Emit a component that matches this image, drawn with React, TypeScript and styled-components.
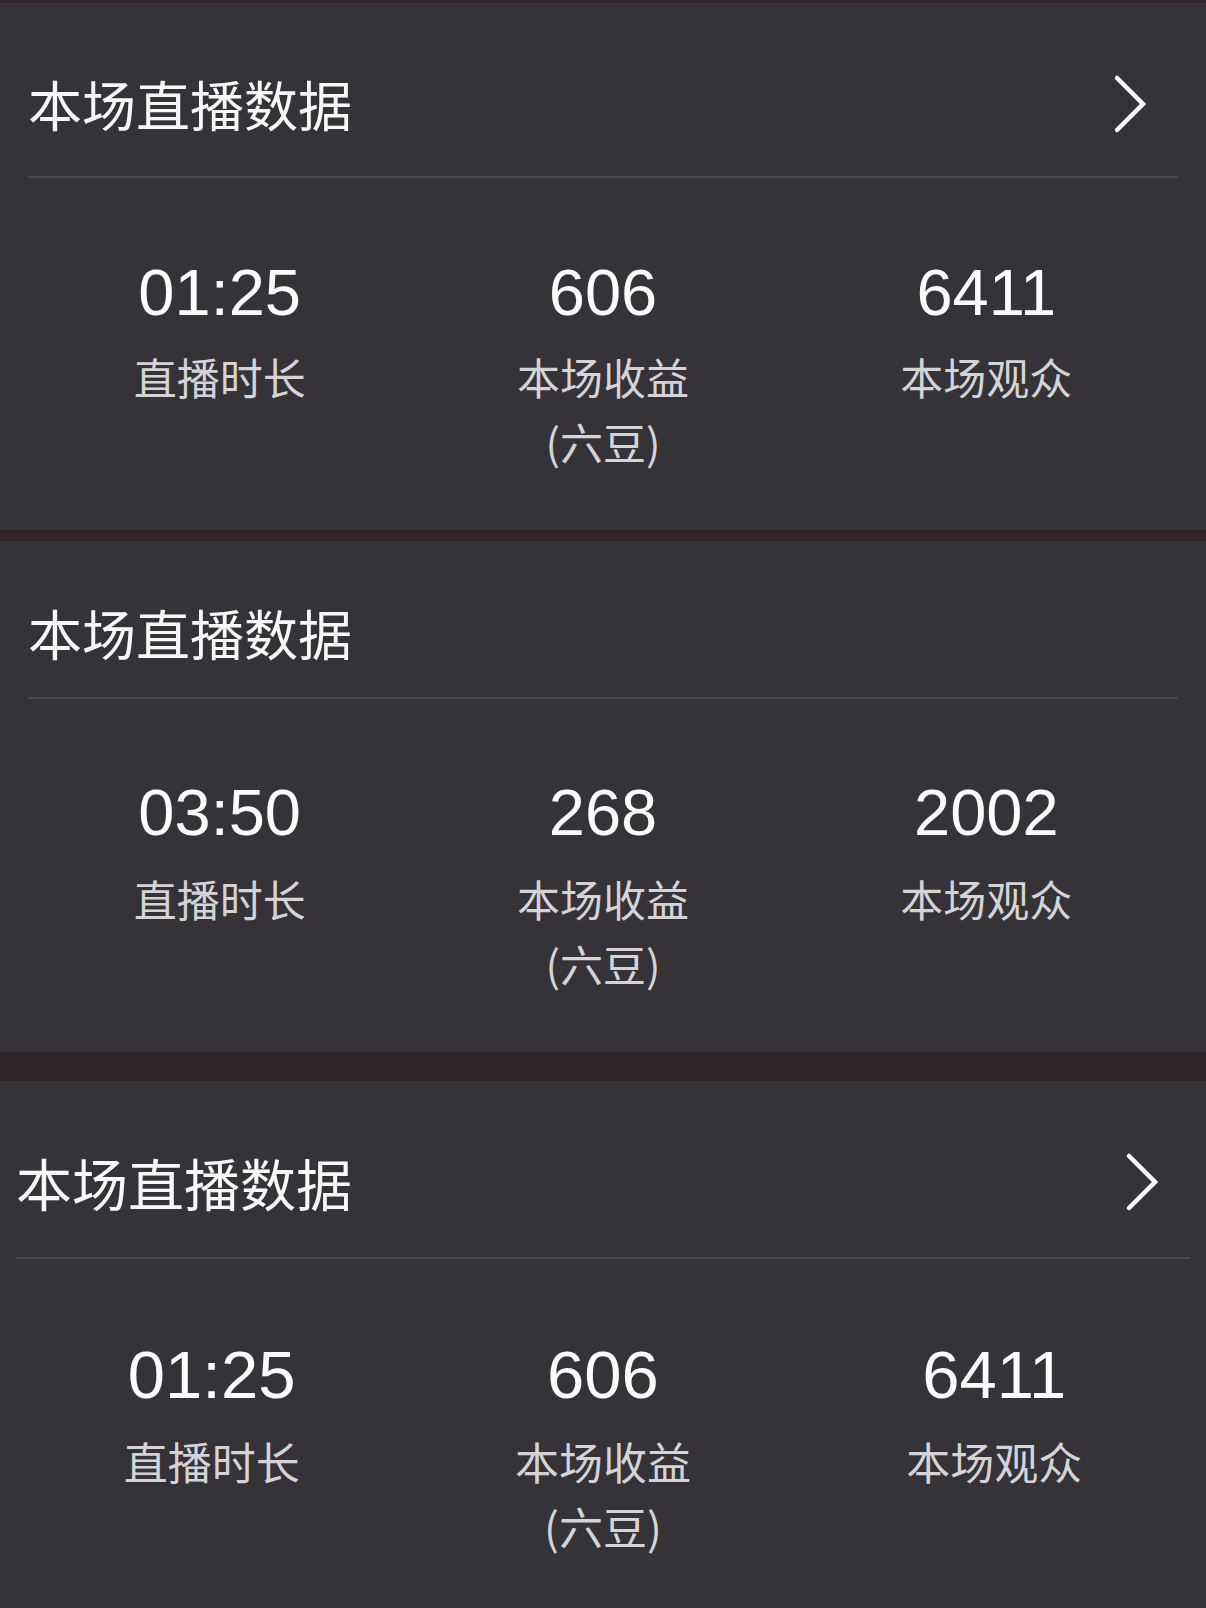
import styled, { createGlobalStyle } from 'styled-components';

const GlobalStyle = createGlobalStyle`
	html,
	body {
		margin: 0;
		padding: 0;
		background-color: #2f2529;
	}
	body {
		font-family: 'Liberation Sans', 'Noto Sans CJK SC', sans-serif;
		-webkit-font-smoothing: antialiased;
	}
`;

const Page = styled.div`
	display: flex;
	flex-direction: column;
	width: 1206px;
	height: 1608px;
	overflow: hidden;
`;

interface CardLayout {
	$offset: number;
	$inset: number;
	$headTop: number;
	$headBottom: number;
	$bodyTop: number;
	$titleSize: number;
	$valueSize: number;
	$labelSize: number;
	$labelGap: number;
}

const Card = styled.section<Pick<CardLayout, '$offset'>>`
	flex-shrink: 0;
	margin-top: ${props => props.$offset}px;
	background-color: #353238;
`;

const Header = styled.header<Pick<CardLayout, '$inset' | '$headTop' | '$headBottom'>>`
	display: flex;
	align-items: center;
	justify-content: space-between;
	margin: 0 ${props => props.$inset}px;
	padding: ${props => props.$headTop}px 0 ${props => props.$headBottom}px;
	border-bottom: 2px solid #4a474e;
`;

const Title = styled.h2<{ $size: number }>`
	margin: 0;
	font-family: 'Noto Sans CJK SC', sans-serif;
	font-weight: 400;
	font-size: ${props => props.$size}px;
	line-height: 1;
	color: #f7f7f7;
`;

const More = styled.svg`
	display: block;
	margin-right: 32px;
	overflow: visible;
`;

const StatGrid = styled.div<Pick<CardLayout, '$inset' | '$bodyTop'>>`
	display: grid;
	grid-template-columns: repeat(3, 1fr);
	margin: 0 ${props => props.$inset}px;
	padding: ${props => props.$bodyTop}px 0 56px;
`;

const Stat = styled.div`
	display: flex;
	flex-direction: column;
	align-items: center;
	text-align: center;
`;

const Value = styled.div<{ $size: number }>`
	font-family: 'Liberation Sans', Arial, sans-serif;
	font-size: ${props => props.$size}px;
	line-height: 1;
	height: 65px;
	display: flex;
	align-items: center;
	color: #fbfbfb;
`;

const Label = styled.div<{ $size: number; $gap: number }>`
	margin-top: ${props => props.$gap}px;
	font-family: 'Noto Sans CJK SC', sans-serif;
	font-size: ${props => props.$size}px;
	line-height: 65px;
	color: #d4d3d6;
`;

interface IStat {
	value: string;
	label: string;
	unit?: string;
}

interface ISession {
	id: number;
	linked: boolean;
	layout: CardLayout;
	stats: IStat[];
}

const sessions: ISession[] = [
	{
		id: 1,
		linked: true,
		layout: {
			$offset: 3,
			$inset: 28,
			$headTop: 72,
			$headBottom: 43,
			$bodyTop: 82,
			$titleSize: 54,
			$valueSize: 65,
			$labelSize: 43,
			$labelGap: 19,
		},
		stats: [
			{ value: '01:25', label: '直播时长' },
			{ value: '606', label: '本场收益', unit: '(六豆)' },
			{ value: '6411', label: '本场观众' },
		],
	},
	{
		id: 2,
		linked: false,
		layout: {
			$offset: 11,
			$inset: 28,
			$headTop: 65,
			$headBottom: 37,
			$bodyTop: 81,
			$titleSize: 54,
			$valueSize: 65,
			$labelSize: 43,
			$labelGap: 21,
		},
		stats: [
			{ value: '03:50', label: '直播时长' },
			{ value: '268', label: '本场收益', unit: '(六豆)' },
			{ value: '2002', label: '本场观众' },
		],
	},
	{
		id: 3,
		linked: true,
		layout: {
			$offset: 29,
			$inset: 16,
			$headTop: 72,
			$headBottom: 46,
			$bodyTop: 83,
			$titleSize: 56,
			$valueSize: 67,
			$labelSize: 44,
			$labelGap: 22,
		},
		stats: [
			{ value: '01:25', label: '直播时长' },
			{ value: '606', label: '本场收益', unit: '(六豆)' },
			{ value: '6411', label: '本场观众' },
		],
	},
];

function Chevron() {
	return (
		<More width="32" height="58" viewBox="0 0 32 58">
			<path
				d="M3 3 L29 29 L3 55"
				fill="none"
				stroke="#ffffff"
				strokeWidth="4.5"
				strokeLinecap="round"
				strokeLinejoin="miter"
			/>
		</More>
	);
}

function App() {
	return (
		<Page>
			<GlobalStyle />
			{sessions.map(session => {
				const l = session.layout;
				return (
					<Card key={session.id} $offset={l.$offset}>
						<Header $inset={l.$inset} $headTop={l.$headTop} $headBottom={l.$headBottom}>
							<Title $size={l.$titleSize}>本场直播数据</Title>
							{session.linked && <Chevron />}
						</Header>
						<StatGrid $inset={l.$inset} $bodyTop={l.$bodyTop}>
							{session.stats.map(stat => (
								<Stat key={stat.label}>
									<Value $size={l.$valueSize}>{stat.value}</Value>
									<Label $size={l.$labelSize} $gap={l.$labelGap}>
										{stat.label}
										{stat.unit && <br />}
										{stat.unit}
									</Label>
								</Stat>
							))}
						</StatGrid>
					</Card>
				);
			})}
		</Page>
	);
}

export default App;
